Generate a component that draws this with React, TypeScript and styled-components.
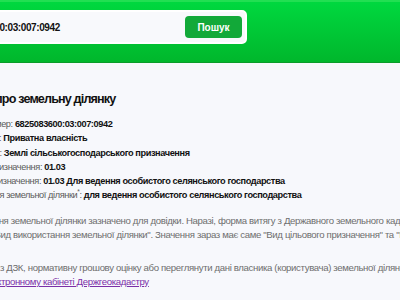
import React, { ReactElement } from 'react';
import styled, { createGlobalStyle } from 'styled-components';

const GlobalStyle = createGlobalStyle`
  html, body {
    margin: 0;
    padding: 0;
    background: #f7f8fc;
    overflow: hidden;
  }
  body {
    font-family: 'Liberation Sans', Arial, sans-serif;
  }
`;

const Page = styled.div`
  margin-left: -67px;
  width: 900px;
`;

const Header = styled.header`
  background: linear-gradient(#00d83f, #00b72c);
  border-top: 2px solid #22df52;
  border-bottom: 1px solid #0a9c2a;
  box-sizing: border-box;
  height: 63px;
  padding-top: 8px;
`;

const SearchBar = styled.form`
  align-items: center;
  background: #f8f9fc;
  border: 2px solid #ffffff;
  border-radius: 5px;
  box-sizing: border-box;
  display: flex;
  height: 34px;
  padding: 0 3px 0 18px;
  width: 314px;
`;

const SearchInput = styled.input`
  background: transparent;
  border: none;
  color: #111;
  flex: 1;
  font-family: inherit;
  font-size: 10px;
  font-weight: 700;
  letter-spacing: -0.4px;
  min-width: 0;
  outline: none;
  padding: 0;
`;

const SearchButton = styled.button`
  background: #12a939;
  border: none;
  border-radius: 4px;
  color: #fff;
  font-family: inherit;
  font-size: 10px;
  font-weight: 700;
  height: 22px;
  width: 57px;
`;

const Main = styled.main`
  padding-top: 28px;
`;

const Title = styled.h1`
  color: #111;
  font-size: 12.6px;
  font-weight: 700;
  letter-spacing: -0.85px;
  line-height: 16px;
  margin: 0 0 10px -4px;
  white-space: nowrap;
`;

const Row = styled.div`
  color: #5a5a5a;
  font-size: 9.2px;
  letter-spacing: -0.4px;
  line-height: 14.3px;
  white-space: nowrap;

  sup {
    font-size: 0.7em;
    line-height: 0;
  }
`;

const Value = styled.b`
  color: #111;
`;

const Note = styled.p<{ $gap: number }>`
  color: #6e6e6e;
  font-size: 9.6px;
  letter-spacing: -0.35px;
  line-height: 14px;
  margin: ${(p) => p.$gap}px 0 0;
  white-space: nowrap;
`;

const Link = styled.a`
  color: #7b2fa8;
`;

const rows = [
  ['Кадастровий номер', '6825083600:03:007:0942'],
  ['Форма власності', 'Приватна власність'],
  ['Категорія земель', 'Землі сільськогосподарського призначення'],
  ['Вид цільового призначення', '01.03'],
  ['Код цільового призначення', '01.03 Для ведення особистого селянського господарства'],
];

const App = (): ReactElement => (
  <Page>
    <GlobalStyle />
    <Header>
      <SearchBar onSubmit={(e): void => e.preventDefault()}>
        <SearchInput defaultValue='6825083600:03:007:0942' />
        <SearchButton type='submit'>Пошук</SearchButton>
      </SearchBar>
    </Header>
    <Main>
      <Title>Інформація про земельну ділянку</Title>
      {rows.map(([label, value]) => (
        <Row key={label}>
          {label}: <Value>{value}</Value>
        </Row>
      ))}
      <Row>
        Вид використання земельної ділянки<sup>*</sup>: <Value>для ведення особистого селянського господарства</Value>
      </Row>
      <Note $gap={11}>
        Вид використання земельної ділянки зазначено для довідки. Наразі, форма витягу з Державного земельного кадастру
        <br />
        не має графи "Вид використання земельної ділянки". Значення зараз має саме "Вид цільового призначення" та "Код
        цільового призначення".
      </Note>
      <Note $gap={19}>
        Замовити витяг з ДЗК, нормативну грошову оцінку або переглянути дані власника (користувача) земельної ділянки можна
        <br />
        у <Link href='#'>власному електронному кабінеті Держгеокадастру</Link>
      </Note>
    </Main>
  </Page>
);

export default App;
